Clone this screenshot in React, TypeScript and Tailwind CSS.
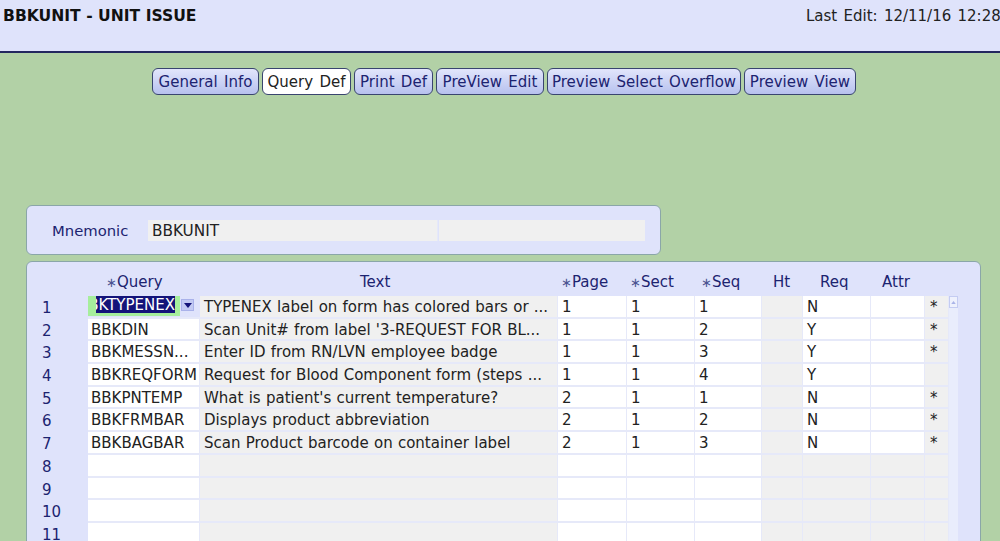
const tabs = [
  { label: "General Info", w: "w-[107px]" },
  { label: "Query Def", w: "w-[89px]", active: true },
  { label: "Print Def", w: "w-[79px]" },
  { label: "PreView Edit", w: "w-[108px]" },
  { label: "Preview Select Overflow", w: "w-[194px]" },
  { label: "Preview View", w: "w-[112px]" },
];

const rows = [
  ["BBKDIN", "Scan Unit# from label '3-REQUEST FOR BL...", "1", "1", "2", "Y", "*"],
  ["BBKMESSN...", "Enter ID from RN/LVN employee badge", "1", "1", "3", "Y", "*"],
  ["BBKREQFORM", "Request for Blood Component form (steps ...", "1", "1", "4", "Y", ""],
  ["BBKPNTEMP", "What is patient's current temperature?", "2", "1", "1", "N", "*"],
  ["BBKFRMBAR", "Displays product abbreviation", "2", "1", "2", "N", "*"],
  ["BBKBAGBAR", "Scan Product barcode on container label", "2", "1", "3", "N", "*"],
];

const grid =
  "grid grid-cols-[61px_112px_358px_69px_68px_67px_41px_68px_54px_24px]";
const cell = "h-[22.7px] border-r border-b-2 border-[#e6e9f9] whitespace-nowrap overflow-hidden leading-[23px]";
const query = "bg-white pl-[3px] " + cell;
const white = "bg-white pl-[4px] " + cell;
const gray = "bg-[#f0f0f0] pl-[4px] [word-spacing:0.5px] " + cell;
const star = "bg-[#f0f0f0] pl-[5px] " + cell;

function Num({ n }: { n: number }) {
  return <div className="h-[22.7px] pl-[15px] leading-[24px] text-[#1c2370]">{n}</div>;
}

function Req() {
  return <span className="inline-block w-[11px] text-[13px] text-[#4a5290]">∗</span>;
}

export default function App() {
  return (
    <div className="h-[541px] w-[1000px] overflow-hidden bg-[#b2d1a6] text-[15px] text-[#222] font-['DejaVu_Sans',sans-serif]">
      <div className="grid h-[53px] grid-cols-[806px_auto] overflow-hidden border-b-2 border-[#23275f] bg-[#dfe3fb]">
        <div className="pl-[3px] pt-[5px] text-[15.6px] font-bold text-[#111]">BBKUNIT - UNIT ISSUE</div>
        <div className="whitespace-nowrap pt-[5px] [word-spacing:1.5px] text-[#222]">Last Edit: 12/11/16 12:28</div>
      </div>

      <div className="flex justify-center gap-[3px] pl-[8px] pt-[15px]">
        {tabs.map((t) => (
          <div
            key={t.label}
            className={
              t.w +
              " flex h-[27px] items-center justify-center whitespace-nowrap rounded-[6px] border border-[#39456f] pt-px [word-spacing:1.5px] " +
              (t.active ? "bg-white text-[#222]" : "bg-gradient-to-b from-[#e2e6fb] to-[#b7c1ee] text-[#1c2370]")
            }
          >
            {t.label}
          </div>
        ))}
      </div>

      <div className="ml-[26px] mt-[110px] flex h-[50px] w-[635px] items-center rounded-[6px] border border-[#8aa6a8] bg-[#dfe3fb] pl-[25px]">
        <div className="w-[96px] pt-[2px] text-[14.8px] text-[#1c2370]">Mnemonic</div>
        <div className="flex h-[21px] items-center">
          <div className="h-[21px] w-[290px] border-r border-[#e6e9f9] bg-[#f0f0f0] pl-1 pt-px text-[15.3px] leading-[21px]">BBKUNIT</div>
          <div className="ml-px h-[21px] w-[206px] bg-[#f0f0f0]" />
        </div>
      </div>

      <div className="ml-[26px] mt-[6px] h-[300px] w-[955px] rounded-[6px] border border-[#8aa6a8] bg-[#dfe3fb]">
        <div className={grid + " h-[34px] items-end pb-[3px] text-[#1c2370]"}>
          <div />
          <div className="pl-[18px]"><Req />Query</div>
          <div className="pl-[160px]">Text</div>
          <div className="pl-[3px]"><Req />Page</div>
          <div className="pl-[3px]"><Req />Sect</div>
          <div className="pl-[6px]"><Req />Seq</div>
          <div className="pl-[11px]">Ht</div>
          <div className="pl-[17px]">Req</div>
          <div className="pl-[11px]">Attr</div>
          <div />
        </div>

        <div className="flex">
          <div>
            <div className={grid}>
              <Num n={1} />
              <div className="flex h-[22.7px] border-b-2 border-[#e6e9f9]">
                <div className="h-[20px] w-[92px] bg-[#a6ee9c] pl-2 pr-[5px]">
                  <div className="flex h-[17px] justify-end overflow-hidden bg-[#14147a] leading-[18px] text-white">BBKTYPENEX</div>
                </div>
                <div className="ml-px mt-[3px] flex h-[12px] w-[13px] items-center justify-center border border-[#a9b2ea] bg-[#c3caf3]">
                  <svg viewBox="0 0 8 5" className="h-[5px] w-2"><path d="M0 0h8L4 5z" fill="#14147a" /></svg>
                </div>
              </div>
              <div className={gray}>TYPENEX label on form has colored bars or ...</div>
              <div className={white}>1</div>
              <div className={white}>1</div>
              <div className={white}>1</div>
              <div className={gray} />
              <div className={white}>N</div>
              <div className={white} />
              <div className={star}>*</div>
            </div>

            {rows.map((r, i) => (
              <div key={i} className={grid}>
                <Num n={i + 2} />
                <div className={query}>{r[0]}</div>
                <div className={gray}>{r[1]}</div>
                <div className={white}>{r[2]}</div>
                <div className={white}>{r[3]}</div>
                <div className={white}>{r[4]}</div>
                <div className={gray} />
                <div className={white}>{r[5]}</div>
                <div className={white} />
                <div className={star}>{r[6]}</div>
              </div>
            ))}

            {[8, 9, 10, 11].map((n) => (
              <div key={n} className={grid}>
                <Num n={n} />
                <div className={white} />
                <div className={gray} />
                <div className={white} />
                <div className={white} />
                <div className={white} />
                <div className={gray} />
                <div className={gray} />
                <div className={gray} />
                <div className={gray} />
              </div>
            ))}
          </div>

          <div className="w-[9px] bg-[#e9edfc]">
            <div className="flex h-[12px] items-center justify-center border border-[#c4ccf2] bg-[#eef1fd]">
              <svg viewBox="0 0 6 4" className="h-[3px] w-[5px]"><path d="M3 0l3 4H0z" fill="#aab4e8" /></svg>
            </div>
          </div>
        </div>
      </div>
    </div>
  );
}
